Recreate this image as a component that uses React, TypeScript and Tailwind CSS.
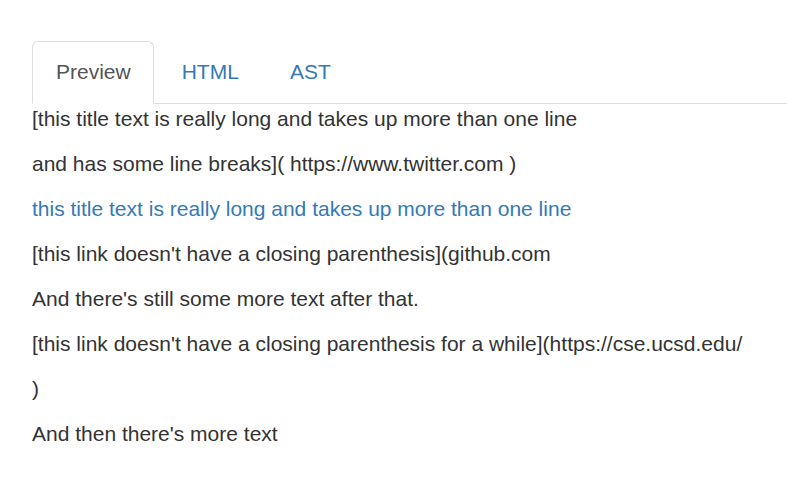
export default function App() {
  return (
    <div className="min-h-[493px] bg-white pl-[32px] pt-[41px] font-['Liberation_Sans',Arial,sans-serif] text-[21px] leading-[30px] text-[#333]">
      {/* tabs */}
      <ul className="flex border-b border-[#ddd]">
        <li className="-mb-px mr-[4px]">
          <span className="block rounded-t-[6px] border border-[#ddd] border-b-transparent bg-white pl-[23px] pr-[22px] pt-[15px] pb-[16px] text-[#555]">
            Preview
          </span>
        </li>
        <li className="-mb-px mr-[3px]">
          <span className="block rounded-t-[6px] border border-transparent px-[23px] pt-[15px] pb-[16px] text-[#337ab7]">HTML</span>
        </li>
        <li className="-mb-px mr-[3px]">
          <span className="block rounded-t-[6px] border border-transparent px-[23px] pt-[15px] pb-[16px] text-[#337ab7]">AST</span>
        </li>
      </ul>

      <div>
        <p className="mb-[15px]">[this title text is really long and takes up more than one line</p>
        <p className="mb-[15px]">and has some line breaks]( https://www.twitter.com )</p>
        <p className="mb-[15px]">
          <a className="text-[#337ab7]">this title text is really long and takes up more than one line</a>
        </p>
        <p className="mb-[15px]">[this link doesn't have a closing parenthesis](github.com</p>
        <p className="mb-[15px]">And there's still some more text after that.</p>
        <p className="mb-[15px]">[this link doesn't have a closing parenthesis for a while](https://cse.ucsd.edu/</p>
        <p className="mb-[15px]">)</p>
        <p className="mb-[15px]">And then there's more text</p>
      </div>
    </div>
  );
}
